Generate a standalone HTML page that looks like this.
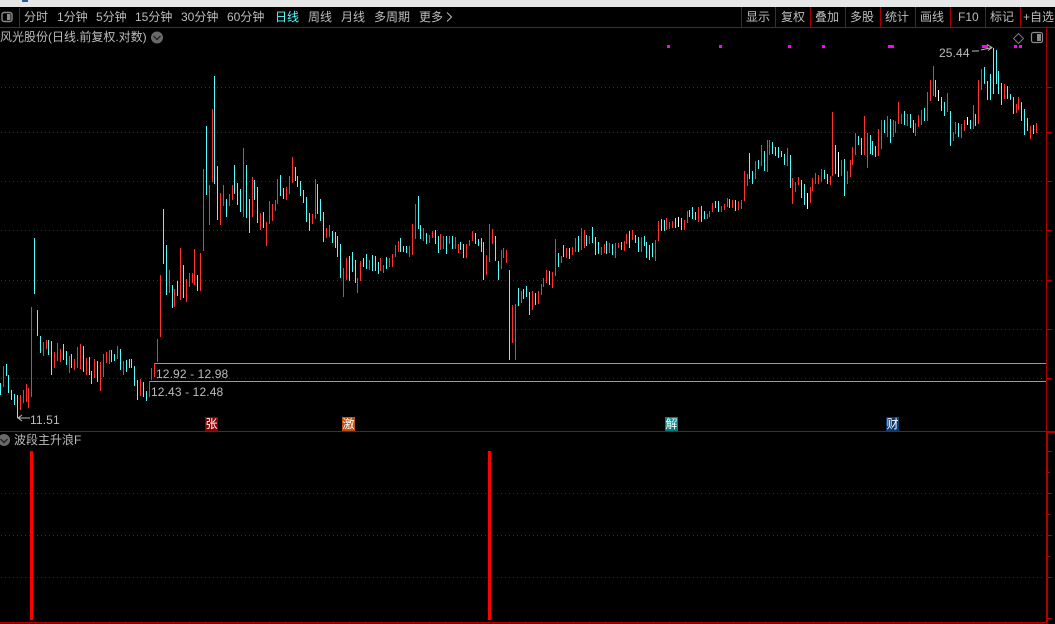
<!DOCTYPE html>
<html><head><meta charset="utf-8"><style>
html,body{margin:0;padding:0;background:#000}
#p{position:relative;width:1055px;height:624px;background:#000;overflow:hidden;font-family:"Liberation Sans","WenQuanYi Zen Hei","Noto Sans CJK SC",sans-serif;font-size:12px;color:#bcbcbc}
.t{position:absolute;white-space:nowrap;line-height:14px;height:14px}
.n{letter-spacing:.12px}
.s{position:absolute;top:7px;width:1px;height:20px;background:#a80000}
.b{position:absolute;width:13px;height:14px;line-height:14px;text-align:center;color:#fff;font-size:12px;top:417px}
svg{position:absolute;left:0;top:0}
</style></head><body><div id="p">
<svg width="1055" height="624" shape-rendering="crispEdges">
<rect x="0" y="0" width="1055" height="7" fill="#e6e6e6"/>
<rect x="22" y="0" width="6" height="2" fill="#1f5f9f"/>
<path d="M0 27.5H1055M19.5 8V27M0 431.5H1047" stroke="#b00000" fill="none"/>
<g stroke="#a00000" stroke-dasharray="1 3" fill="none"><path d="M1 87.5H1043M1 132.5H1043M1 181.5H1043M1 230.5H1043M1 280.5H1043M1 329.5H1043M1 378.5H1043"/></g>
<g stroke="#7c1010" stroke-dasharray="1 3" fill="none"><path d="M1 493.5H1043M1 535.5H1043M1 577.5H1043"/></g>
<path d="M154 363.5H1046M149 381.5H1046" stroke="#9a9a9a" fill="none"/>
<path d="M1046.5 28V431M1046.5 431V622M1047.5 431V622M0 622.5H1047M1047 87.5H1052M1047 132.5H1052M1047 181.5H1052M1047 230.5H1052M1047 280.5H1052M1047 329.5H1052M1047 378.5H1052M1047 431.5H1055M1047 432.5H1055M1047 451.5H1052M1047 493.5H1052M1047 535.5H1052M1047 577.5H1052M1047 618.5H1052M1047 472.5H1050M1047 514.5H1050M1047 556.5H1050" stroke="#b00000" fill="none"/>
<path d="M13 623.5H1047" stroke="#a00000" stroke-dasharray="1 15" fill="none"/>
<g transform="translate(.5,0)" fill="none">
<path stroke="#ff3232" d="M3 366V387M20 395V410M23 390V403M26 384V402M28 388V408M31 307V397M43 342V356M46 340V349M54 352V368M57 343V361M60 349V362M69 356V373M74 359V370M77 347V368M80 344V369M86 358V375M94 359V378M100 362V391M103 354V377M106 352V363M109 350V364M117 346V359M123 361V375M140 379V396M149 381V397M151 368V380M154 363V377M157 339V362M160 275V337M169 270V293M174 289V307M180 248V300M186 279V302M189 273V287M192 273V283M194 249V285M200 253V291M203 169V251M209 185V225M212 109V182M220 193V225M223 185V206M229 194V206M232 185V200M243 148V217M252 177V217M260 213V230M266 222V246M269 201V224M272 204V221M275 200V211M277 179V204M286 187V200M289 176V194M292 157V183M312 214V224M315 179V219M326 228V238M329 225V237M343 268V297M346 258V280M357 278V293M360 261V281M369 260V270M380 258V271M383 265V273M389 258V267M392 254V267M395 245V257M398 241V252M409 246V257M412 224V255M415 204V239M423 228V241M429 235V243M432 231V238M440 234V250M443 236V249M449 236V244M455 237V249M458 244V253M466 244V258M469 240V246M472 231V241M486 255V275M489 224V262M492 229V244M501 250V269M503 248V258M506 250V263M512 305V343M515 304V360M521 291V303M532 291V310M538 291V304M541 284V295M543 278V287M546 270V283M552 272V288M555 239V276M561 256V263M566 248V258M572 247V255M575 238V252M581 228V250M584 230V248M589 236V244M601 247V255M604 244V253M609 243V253M615 243V258M618 243V248M624 241V251M626 234V244M632 230V240M641 237V252M655 240V261M658 221V241M666 218V230M669 222V229M672 221V228M684 220V230M687 211V223M698 207V222M707 214V219M709 211V217M712 203V212M721 206V212M724 204V210M727 198V207M732 200V208M738 201V210M741 200V209M744 171V201M747 174V186M755 161V179M761 145V166M767 140V172M769 140V155M787 148V166M792 178V204M795 182V192M798 177V185M810 187V203M812 178V191M815 173V184M818 175V184M821 169V182M830 176V185M832 112V176M841 160V176M847 171V184M850 160V177M852 147V165M855 133V155M864 116V155M867 133V168M878 129V156M881 120V149M887 116V137M893 120V137M895 121V133M898 102V124M901 114V124M907 114V126M915 123V136M918 115V127M921 110V125M927 92V121M930 80V101M933 66V96M947 93V112M953 132V141M955 122V134M961 124V138M964 120V131M973 105V129M978 80V124M981 69V90M1004 84V99M1016 104V113M1018 97V110M1030 126V139M1036 123V133"/>
<path stroke="#54fcfc" d="M0 383V395M6 364V376M8 375V393M11 390V400M14 394V405M17 395V418M34 238V294M37 310V336M40 336V353M48 340V355M51 341V375M63 344V360M66 351V365M71 354V368M83 346V372M89 357V375M91 371V384M97 361V382M111 350V362M114 354V361M120 349V370M126 360V372M129 359V368M131 359V368M134 366V386M137 380V400M143 382V397M146 391V401M163 209V264M166 245V295M172 285V308M177 281V296M183 265V298M197 275V291M206 126V195M214 76V184M217 166V220M226 199V217M234 165V194M237 183V205M240 189V212M246 165V218M249 199V233M254 180V200M257 187V223M263 212V228M280 175V196M283 188V199M295 167V181M297 176V187M300 181V196M303 190V203M306 197V222M309 213V231M317 184V214M320 199V221M323 212V242M332 231V243M335 232V248M337 236V257M340 244V278M349 256V281M352 252V272M355 260V283M363 258V267M366 254V269M372 255V271M375 256V271M378 262V274M386 257V269M400 238V252M403 246V252M406 246V253M418 196V229M420 225V239M426 233V244M435 230V244M438 236V253M446 236V254M452 236V249M460 242V250M463 244V258M475 233V244M478 239V246M481 238V252M483 242V280M495 236V261M498 261V280M509 270V360M518 288V306M523 289V299M526 286V297M529 292V315M535 293V305M549 271V285M558 253V267M563 245V257M569 248V259M578 236V252M586 235V246M592 227V243M595 237V255M598 242V254M606 241V254M612 244V255M621 242V250M629 231V248M635 235V243M638 237V252M644 236V246M646 242V258M649 245V260M652 243V257M661 219V231M664 220V231M675 218V228M681 218V230M689 210V217M692 207V219M695 212V220M701 206V222M704 211V219M715 201V208M718 201V212M729 199V208M735 200V211M749 153V179M752 171V184M758 160V169M764 151V171M772 142V154M775 147V156M778 147V158M781 151V157M784 154V165M790 155V188M801 180V198M804 184V205M824 170V179M827 174V184M835 145V174M844 159V196M858 136V145M861 138V155M870 135V154M872 141V155M875 146V157M884 120V133M890 119V143M904 111V125M910 114V128M913 120V133M924 108V121M935 80V97M941 97V111M944 102V116M950 111V146M958 123V137M970 120V129M975 114V126M984 67V84M987 81V100M990 74V100M993 48V94M996 50V84M998 71V94M1001 83V105M1007 86V99M1010 94V100M1013 97V114M1021 102V121M1024 109V135M1027 118V131M1033 125V134"/>
<path stroke="#ffffff" d="M678 217V227M807 193V209M838 152V177M938 90V101M967 117V125"/>
</g>
<path fill="#ff00ff" d="M667 45h3v3h-3zM719 45h3v3h-3zM788 45h3v3h-3zM822 45h3v3h-3zM888 45h6v3h-6zM982 45h6v3h-6zM1014 45h3v3h-3zM1019 45h3v3h-3z"/>
<rect x="30" y="451" width="3" height="169" fill="#ff0000"/>
<rect x="488" y="451" width="3" height="169" fill="#ff0000"/>
<g shape-rendering="auto" fill="none">
<rect x="2" y="12.5" width="10" height="9" rx="2" stroke="#8a8a8a" stroke-width="1.4"/><rect x="7" y="14" width="3.5" height="6" fill="#8a8a8a"/>
<rect x="1031.5" y="32.5" width="11" height="10" rx="2" stroke="#8a8a8a" stroke-width="1.2"/><rect x="1037" y="34" width="4" height="7" fill="#8a8a8a"/>
<path d="M1018.5 33.5L1023.5 38.5L1018.5 43.5L1013.5 38.5Z" stroke="#7a7a7a"/>
<circle cx="157" cy="37.5" r="6" fill="#6a6a6a"/><path d="M153.5 36L157 39.5L160.5 36" stroke="#222" stroke-width="1.4"/>
<circle cx="4" cy="440" r="6" fill="#6a6a6a"/><path d="M0.5 439L4 442.5L7.5 439" stroke="#222" stroke-width="1.4"/>
<path d="M447 12.5L451.5 17L447 21.5" stroke="#bcbcbc"/>
<path d="M972 51H979M981 50L992 47.5M987 44.5L992 47.5L988 50.5" stroke="#bcbcbc"/>
<path d="M30 418H18M22 415L18 418L22 421" stroke="#bcbcbc"/>
</g>
</svg>
<div class="t" style="left:24px;top:10px">分时</div>
<div class="t" style="left:57px;top:10px">1分钟</div>
<div class="t" style="left:96px;top:10px">5分钟</div>
<div class="t" style="left:135px;top:10px">15分钟</div>
<div class="t" style="left:181px;top:10px">30分钟</div>
<div class="t" style="left:227px;top:10px">60分钟</div>
<div class="t" style="left:275px;top:10px;color:#54fcfc">日线</div>
<div class="t" style="left:308px;top:10px">周线</div>
<div class="t" style="left:341px;top:10px">月线</div>
<div class="t" style="left:374px;top:10px">多周期</div>
<div class="t" style="left:419px;top:10px">更多</div>
<div class="s" style="left:741px"></div><div class="s" style="left:775px"></div><div class="s" style="left:810px"></div><div class="s" style="left:845px"></div><div class="s" style="left:880px"></div><div class="s" style="left:915px"></div><div class="s" style="left:950px"></div><div class="s" style="left:985px"></div><div class="s" style="left:1020px"></div>
<div class="t" style="left:746px;top:10px">显示</div>
<div class="t" style="left:781px;top:10px">复权</div>
<div class="t" style="left:815px;top:10px">叠加</div>
<div class="t" style="left:850px;top:10px">多股</div>
<div class="t" style="left:885px;top:10px">统计</div>
<div class="t" style="left:920px;top:10px">画线</div>
<div class="t" style="left:958px;top:10px">F10</div>
<div class="t" style="left:990px;top:10px">标记</div>
<div class="t" style="left:1023px;top:10px">+自选</div>
<div class="t" style="left:0;top:30px">风光股份(日线.前复权.对数)</div>
<div class="t n" style="left:939px;top:46px">25.44</div>
<div class="t n" style="left:156px;top:367px">12.92 - 12.98</div>
<div class="t n" style="left:151px;top:385px">12.43 - 12.48</div>
<div class="t n" style="left:30px;top:413px">11.51</div>
<div class="b" style="left:205px;background:#8b0000">张</div>
<div class="b" style="left:342px;background:#c05010">激</div>
<div class="b" style="left:665px;background:#008080">解</div>
<div class="b" style="left:886px;background:#0a3a70">财</div>
<div class="t" style="left:14px;top:433px">波段主升浪F</div>
</div></body></html>
